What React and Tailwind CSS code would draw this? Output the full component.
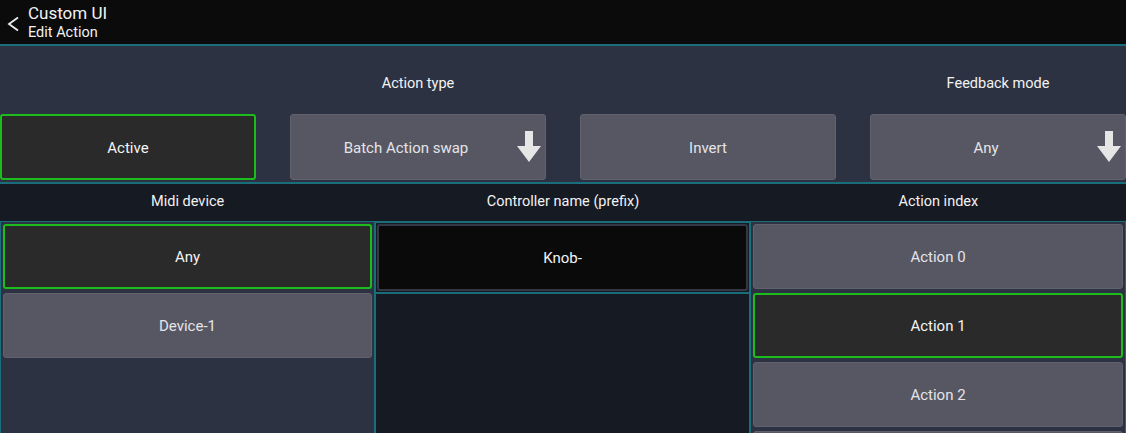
const teal = 'border-[#1a6e7b]';

function DownArrow() {
  return (
    <svg width="24" height="32" viewBox="0 0 24 32" className="absolute right-[4px] top-1/2 -translate-y-1/2">
      <rect x="8" y="0" width="8" height="16" fill="#e6e6e6" />
      <polygon points="0,15 24,15 12,31" fill="#e6e6e6" />
    </svg>
  );
}

function Btn({ label, selected, dark, arrow, className = '' }) {
  let cls = 'bg-[#575763] border border-[#62626e] text-[#e4e4e8]';
  if (selected) cls = 'bg-[#2a2a2a] border-2 border-[#1cbc1c] text-[#f4f4f4]';
  if (dark) cls = 'bg-[#0a0a0a] border-2 border-[#343844] text-[#f4f4f4]';
  return (
    <div className={`relative flex items-center justify-center rounded-[3px] text-[15px] pt-[2px] ${arrow ? 'pr-[24px]' : ''} ${cls} ${className}`}>
      <span>{label}</span>
      {arrow && <DownArrow />}
    </div>
  );
}

export default function App() {
  return (
    <div className="w-[1126px] h-[433px] overflow-hidden bg-[#161a23] text-[#f2f2f2]" style={{ fontFamily: 'Roboto, "Noto Sans", sans-serif' }}>
      {/* header */}
      <div className={`h-[46px] bg-[#0b0b0b] border-b-2 ${teal} flex items-center`}>
        <svg width="14" height="16" viewBox="0 0 14 16" className="ml-[6px] mt-[4px]">
          <polyline points="12,1.5 3,8 12,14.5" fill="none" stroke="#eeeeee" strokeWidth="1.8" />
        </svg>
        <div className="ml-[8px] flex flex-col leading-none mt-[1px]">
          <span className="text-[17px]">Custom UI</span>
          <span className="text-[14.5px] mt-[4px]">Edit Action</span>
        </div>
      </div>

      {/* top settings */}
      <div className={`bg-[#2c3241] border-b-2 ${teal}`}>
        <div className="grid grid-cols-4 gap-x-[34px] h-[68px] items-center pt-[7px] text-[14.5px]">
          <div />
          <div className="text-center">Action type</div>
          <div />
          <div className="text-center">Feedback mode</div>
        </div>
        <div className="grid grid-cols-4 gap-x-[34px] pb-[2px]">
          <Btn label="Active" selected className="h-[66px]" />
          <Btn label="Batch Action swap" arrow className="h-[66px]" />
          <Btn label="Invert" className="h-[66px]" />
          <Btn label="Any" arrow className="h-[66px]" />
        </div>
      </div>

      {/* column labels */}
      <div className="grid grid-cols-3 h-[37px] items-center pb-[1px] text-[14.5px]">
        <div className="text-center">Midi device</div>
        <div className="text-center">Controller name (prefix)</div>
        <div className="text-center">Action index</div>
      </div>

      {/* lists */}
      <div className="grid grid-cols-[375px_375px_376px] h-[220px]">
        <div className={`border ${teal} bg-[#2c3241] p-[2px] flex flex-col gap-[4px]`}>
          <Btn label="Any" selected className="h-[65px] shrink-0" />
          <Btn label="Device-1" className="h-[65px] shrink-0" />
        </div>
        <div className={`border-x ${teal} flex flex-col`}>
          <div className={`border-y-2 ${teal} p-[1px] -mx-[1px] border-x`}>
            <Btn label="Knob-" dark className="h-[67px]" />
          </div>
        </div>
        <div className={`border ${teal} bg-[#2c3241] p-[2px] flex flex-col gap-[4px]`}>
          <Btn label="Action 0" className="h-[65px] shrink-0" />
          <Btn label="Action 1" selected className="h-[65px] shrink-0" />
          <Btn label="Action 2" className="h-[65px] shrink-0" />
          <div className="h-[65px] shrink-0 rounded-[3px] bg-[#575763] border border-[#62626e]" />
        </div>
      </div>
    </div>
  );
}
